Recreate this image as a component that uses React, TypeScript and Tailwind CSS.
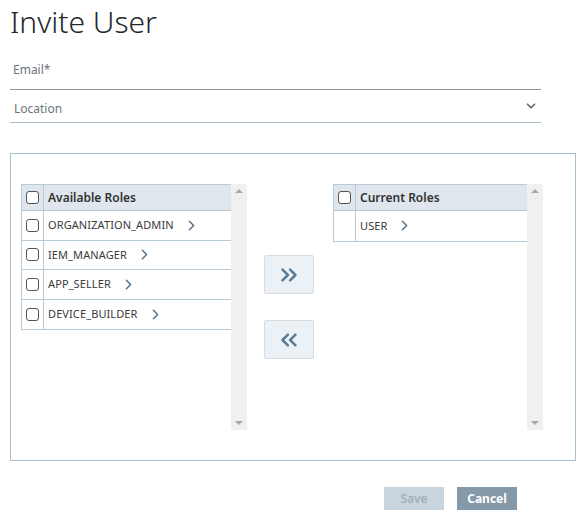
import { ChevronDown, ChevronRight, ChevronsRight, ChevronsLeft } from 'lucide-react'

const available = ['ORGANIZATION_ADMIN', 'IEM_MANAGER', 'APP_SELLER', 'DEVICE_BUILDER']
const current = ['USER']

function Box() {
  return <span className="block w-[13px] h-[13px] rounded-[3px] border border-[#555] bg-white" />
}

function Scrollbar() {
  return (
    <div className="w-[16px] h-[246px] bg-[#f0f0f0] flex flex-col items-center justify-between py-[5px]">
      <span className="w-0 h-0 border-x-[4px] border-x-transparent border-b-[4px] border-b-[#a8a8a8]" />
      <span className="w-0 h-0 border-x-[4px] border-x-transparent border-t-[4px] border-t-[#a8a8a8]" />
    </div>
  )
}

function RoleTable({ title, rows, width, rowChecks }: { title: string; rows: string[]; width: string; rowChecks: boolean }) {
  return (
    <div className="flex items-start">
      <div className={`${width} border border-[#b8cad6] border-r-0`}>
        <div className="flex h-[26px] bg-[#dfe6ee] border-b border-[#b8cad6]">
          <div className="w-[22px] border-r border-[#b8cad6] flex items-center justify-center">
            <Box />
          </div>
          <div className="flex items-center pl-[4px] text-[12px] font-semibold text-[#333]">{title}</div>
        </div>
        {rows.map((r, i) => (
          <div key={r} className={`flex h-[29.5px] ${i < rows.length - 1 ? 'border-b border-[#b8cad6]' : ''}`}>
            <div className="w-[22px] border-r border-[#b8cad6] flex items-center justify-center">
              {rowChecks && <Box />}
            </div>
            <div className="flex items-center pl-[4px] text-[11px] text-[#3a3a3a] tracking-[0.1px]">
              <span>{r}</span>
              <ChevronRight className="ml-[9px] w-[17px] h-[17px] text-[#4f6e88]" strokeWidth={2} />
            </div>
          </div>
        ))}
      </div>
      <Scrollbar />
    </div>
  )
}

export default function App() {
  return (
    <div className="w-[579px] h-[524px] bg-white font-['Noto_Sans',sans-serif] relative">
      <h1 className="pl-[10px] pt-[2px] text-[30px] leading-[40px] font-light text-[#23282c]">Invite User</h1>

      <div className="ml-[10px] w-[531px] mt-[12px]">
        <div className="h-[36px] border-b border-[#8e979e] flex items-start pl-[3px] text-[12px] text-[#6c757c] pt-[7px]">
          Email*
        </div>
        <div className="h-[33px] border-b border-[#a9bccb] flex items-center justify-between pl-[4px] pr-[3px] pt-[5px] text-[12px] text-[#6c757c]">
          <span>Location</span>
          <ChevronDown className="w-[14px] h-[14px] text-[#6a6a6a] mb-[6px]" strokeWidth={3} />
        </div>
      </div>

      <div className="ml-[10px] mt-[30px] w-[566px] h-[308px] border border-[#a7c0ce] pl-[10px] pt-[30px] flex items-start">
        <RoleTable title="Available Roles" rows={available} width="w-[210px]" rowChecks />
        <div className="ml-[17px] mt-[71px] flex flex-col gap-[26px]">
          <button className="w-[50px] h-[39px] bg-[#ecf1f5] border border-[#d6dce1] rounded-[2px] flex items-center justify-center">
            <ChevronsRight className="w-[26px] h-[26px] text-[#5b7c96]" strokeWidth={2.3} />
          </button>
          <button className="w-[50px] h-[39px] bg-[#ecf1f5] border border-[#d6dce1] rounded-[2px] flex items-center justify-center">
            <ChevronsLeft className="w-[26px] h-[26px] text-[#5b7c96]" strokeWidth={2.3} />
          </button>
        </div>
        <div className="ml-[19px]">
          <RoleTable title="Current Roles" rows={current} width="w-[194px]" rowChecks={false} />
        </div>
      </div>

      <div className="flex justify-end gap-[13px] mt-[26px] pr-[62px]">
        <button className="w-[60px] h-[23px] bg-[#c8d5de] text-[#a2b0bb] text-[12px] font-semibold">Save</button>
        <button className="w-[60px] h-[23px] bg-[#8599a9] text-white text-[12px] font-bold">Cancel</button>
      </div>
    </div>
  )
}
